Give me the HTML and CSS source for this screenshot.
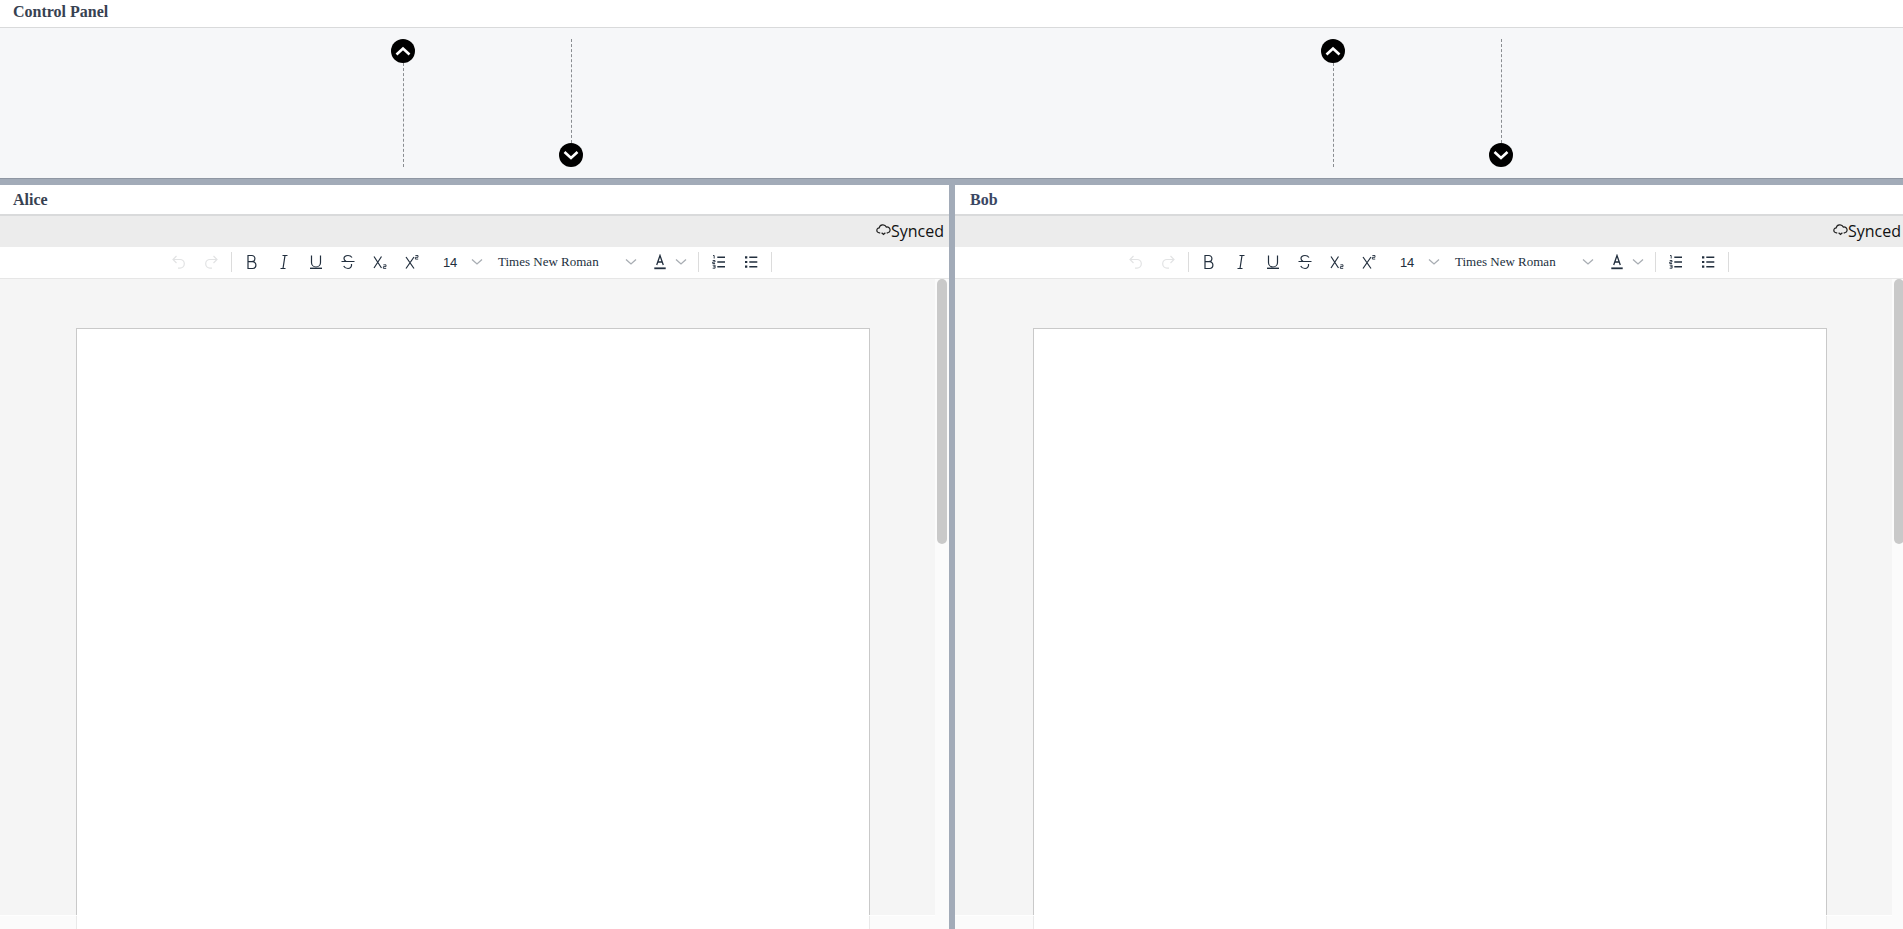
FILE: index.html
```html
<!doctype html>
<html lang="en">
  <head>
    <meta charset="utf-8">
    <meta name="viewport" content="width=device-width, initial-scale=1">
    <title>Control Panel</title>
    <link rel="stylesheet" href="styles.css">
  </head>
  <body>
    <section class="control">
      <div class="title-bar">Control Panel</div>
      <div class="sim">
        <div class="sim-half">
          <div class="lane">
            <span class="arrow"><svg viewBox="0 0 24 24"><circle cx="12" cy="12" r="12"/><path d="M5.500 15.500 12 9.500l6.500 6"/></svg></span>
            <span class="dash"></span>
          </div>
          <div class="lane">
            <span class="dash"></span>
            <span class="arrow"><svg viewBox="0 0 24 24"><circle cx="12" cy="12" r="12"/><path d="M5.500 9 12 15l6.500-6"/></svg></span>
          </div>
        </div>
        <div class="sim-half">
          <div class="lane">
            <span class="arrow"><svg viewBox="0 0 24 24"><circle cx="12" cy="12" r="12"/><path d="M5.500 15.500 12 9.500l6.500 6"/></svg></span>
            <span class="dash"></span>
          </div>
          <div class="lane">
            <span class="dash"></span>
            <span class="arrow"><svg viewBox="0 0 24 24"><circle cx="12" cy="12" r="12"/><path d="M5.500 9 12 15l6.500-6"/></svg></span>
          </div>
        </div>
      </div>
    </section>

    <main class="panes">
      <section class="pane pane-alice">
        <div class="title-bar">Alice</div>
        <div class="status"><svg class="cloud" viewBox="0 0 16 16"><path d="M4.500 11.500H3.600A2.600 2.600 0 0 1 3.400 6.300 4 4 0 0 1 11 5.400a3.100 3.100 0 0 1 1.600 6.100h-1.200M6 11.500l2 1.800 2-1.800"/></svg><span>Synced</span></div>
        <div class="toolbar">
          <span class="tool off"><svg viewBox="0 0 16 16"><path d="M5.500 2 2 5.500 5.500 9M2 5.500h7a4.300 4.300 0 0 1 0 8.600H7"/></svg></span>
          <span class="tool off"><svg viewBox="0 0 16 16"><path d="M10.500 2 14 5.500 10.500 9M14 5.500H7a4.300 4.300 0 0 0 0 8.600h2"/></svg></span>
          <span class="sep"></span>
          <span class="tool"><svg viewBox="0 0 16 16"><path d="M4 1.500v13h4.500a3.400 3.400 0 0 0 0-6.800H4h3.800a3.100 3.100 0 0 0 0-6.200z"/></svg></span>
          <span class="tool"><svg viewBox="0 0 16 16"><path d="M6.500 1.500h5M4.500 14.500h5M9 1.500l-2 13"/></svg></span>
          <span class="tool"><svg viewBox="0 0 16 16"><path d="M3.500 1.500v7a4.500 4.500 0 0 0 9 0v-7"/><path class="heavy" d="M2 14.300h12"/></svg></span>
          <span class="tool"><svg viewBox="0 0 16 16"><path d="M12 3.500C11 2 9.500 1.500 8 1.500c-2 0-4 1-4 3 0 1 .5 2 2 2.800M1.500 7.500h13M11.500 10c.5 3-1.500 4.500-3.500 4.500-2 0-3.500-1-4.300-2.500"/></svg></span>
          <span class="tool"><svg viewBox="0 0 16 16"><path d="M2 2.500 9.500 14M9.500 2.500 2 14"/><path class="script" d="M11.400 10.800H14v1.800h-2.600v1.800h2.800"/></svg></span>
          <span class="tool"><svg viewBox="0 0 16 16"><path d="M2 3l8 11.500M10 3 2 14.500"/><path class="script" d="M11.400 1.500H14v1.800h-2.600v1.800h2.800"/></svg></span>
          <span class="select select-size"><span class="size-val">14</span><svg class="chev" viewBox="0 0 12 8"><path d="M1 1.500 6 6l5-4.500"/></svg></span>
          <span class="select select-font"><span class="font-val">Times New Roman</span><svg class="chev" viewBox="0 0 12 8"><path d="M1 1.500 6 6l5-4.500"/></svg></span>
          <span class="select select-color"><svg class="color-a" viewBox="0 0 16 16"><path d="M4.700 11 8 1.500 11.300 11M5.800 8h4.400"/><path class="bar" d="M2.300 14.300h11.400"/></svg><svg class="chev" viewBox="0 0 12 8"><path d="M1 1.500 6 6l5-4.500"/></svg></span>
          <span class="sep"></span>
          <span class="tool"><svg viewBox="0 0 16 16"><path class="heavy" d="M6.300 3.300H14M6.300 8H14M6.300 12.700H14"/><path class="script" d="M2 1.500h1.200v3M1.700 6.500h2.300v1.500H1.700v1.500h2.400M1.700 11.200h2.400v3H1.700M2.400 12.700h1.500"/></svg></span>
          <span class="tool"><svg viewBox="0 0 16 16"><path class="heavy" d="M6.300 3.300h8M6.300 8h8M6.300 12.700h8"/><path class="dot" d="M2 3.300h2.300M2 8h2.300M2 12.700h2.300"/></svg></span>
          <span class="sep"></span>
        </div>
        <div class="doc-wrap">
          <div class="doc"><div class="page"></div></div>
          <div class="track-v"><div class="thumb"></div></div>
          <div class="track-h"></div>
        </div>
      </section>
      <div class="split"></div>
      <section class="pane pane-bob">
        <div class="title-bar">Bob</div>
        <div class="status"><svg class="cloud" viewBox="0 0 16 16"><path d="M4.500 11.500H3.600A2.600 2.600 0 0 1 3.400 6.300 4 4 0 0 1 11 5.400a3.100 3.100 0 0 1 1.600 6.100h-1.200M6 11.500l2 1.800 2-1.800"/></svg><span>Synced</span></div>
        <div class="toolbar">
          <span class="tool off"><svg viewBox="0 0 16 16"><path d="M5.500 2 2 5.500 5.500 9M2 5.500h7a4.300 4.300 0 0 1 0 8.600H7"/></svg></span>
          <span class="tool off"><svg viewBox="0 0 16 16"><path d="M10.500 2 14 5.500 10.500 9M14 5.500H7a4.300 4.300 0 0 0 0 8.600h2"/></svg></span>
          <span class="sep"></span>
          <span class="tool"><svg viewBox="0 0 16 16"><path d="M4 1.500v13h4.500a3.400 3.400 0 0 0 0-6.800H4h3.800a3.100 3.100 0 0 0 0-6.200z"/></svg></span>
          <span class="tool"><svg viewBox="0 0 16 16"><path d="M6.500 1.500h5M4.500 14.500h5M9 1.500l-2 13"/></svg></span>
          <span class="tool"><svg viewBox="0 0 16 16"><path d="M3.500 1.500v7a4.500 4.500 0 0 0 9 0v-7"/><path class="heavy" d="M2 14.300h12"/></svg></span>
          <span class="tool"><svg viewBox="0 0 16 16"><path d="M12 3.500C11 2 9.500 1.500 8 1.500c-2 0-4 1-4 3 0 1 .5 2 2 2.800M1.500 7.500h13M11.500 10c.5 3-1.500 4.500-3.500 4.500-2 0-3.500-1-4.300-2.500"/></svg></span>
          <span class="tool"><svg viewBox="0 0 16 16"><path d="M2 2.500 9.500 14M9.500 2.500 2 14"/><path class="script" d="M11.400 10.800H14v1.800h-2.600v1.800h2.800"/></svg></span>
          <span class="tool"><svg viewBox="0 0 16 16"><path d="M2 3l8 11.500M10 3 2 14.500"/><path class="script" d="M11.400 1.500H14v1.800h-2.600v1.800h2.800"/></svg></span>
          <span class="select select-size"><span class="size-val">14</span><svg class="chev" viewBox="0 0 12 8"><path d="M1 1.500 6 6l5-4.500"/></svg></span>
          <span class="select select-font"><span class="font-val">Times New Roman</span><svg class="chev" viewBox="0 0 12 8"><path d="M1 1.500 6 6l5-4.500"/></svg></span>
          <span class="select select-color"><svg class="color-a" viewBox="0 0 16 16"><path d="M4.700 11 8 1.500 11.300 11M5.800 8h4.400"/><path class="bar" d="M2.300 14.300h11.400"/></svg><svg class="chev" viewBox="0 0 12 8"><path d="M1 1.500 6 6l5-4.500"/></svg></span>
          <span class="sep"></span>
          <span class="tool"><svg viewBox="0 0 16 16"><path class="heavy" d="M6.300 3.300H14M6.300 8H14M6.300 12.700H14"/><path class="script" d="M2 1.500h1.200v3M1.700 6.500h2.300v1.500H1.700v1.500h2.400M1.700 11.200h2.400v3H1.700M2.400 12.700h1.500"/></svg></span>
          <span class="tool"><svg viewBox="0 0 16 16"><path class="heavy" d="M6.300 3.300h8M6.300 8h8M6.300 12.700h8"/><path class="dot" d="M2 3.300h2.300M2 8h2.300M2 12.700h2.300"/></svg></span>
          <span class="sep"></span>
        </div>
        <div class="doc-wrap">
          <div class="doc"><div class="page"></div></div>
          <div class="track-v"><div class="thumb"></div></div>
          <div class="track-h"></div>
        </div>
      </section>
    </main>
  </body>
</html>
```

FILE: styles.css
```css
* {
  box-sizing: border-box;
}
html, body {
  height: 100%;
}
body {
  margin: 0;
  display: flex;
  flex-direction: column;
  overflow: hidden;
  background: white;
  font-family: "Liberation Serif", serif;
}
.title-bar {
  height: 28px;
  padding: 3px 0 0 13px;
  flex: none;
  font-size: 16px;
  font-weight: bold;
  line-height: 18px;
  color: #374151;
  background: white;
  border-bottom: 1px solid #d9dadb;
}
.control {
  flex: none;
}
.sim {
  height: 151px;
  display: flex;
  background: #f6f7f9;
  border-bottom: 1px solid #8f97a3;
}
.sim-half {
  width: 930px;
  flex: none;
  display: flex;
  padding-left: 391px;
  gap: 144px;
}
.lane {
  width: 24px;
  height: 128px;
  margin-top: 11px;
  display: flex;
  flex-direction: column;
  align-items: center;
}
.dash {
  flex: 1;
  width: 0;
  margin-left: 1px;
  border-left: 1px dashed #8a8d91;
}
.arrow {
  width: 24px;
  height: 24px;
  flex: none;
}
.arrow svg {
  display: block;
  width: 24px;
  height: 24px;
}
.arrow circle {
  fill: black;
}
.arrow path {
  fill: none;
  stroke: white;
  stroke-width: 2.6;
}
.panes {
  flex: 1;
  min-height: 0;
  display: flex;
  border-top: 6px solid #a2abb8;
}
.pane {
  flex: none;
  display: flex;
  flex-direction: column;
  min-height: 0;
}
.pane-alice {
  width: 949px;
}
.pane-bob {
  width: 951px;
}
.split {
  width: 6px;
  flex: none;
  background: #a2abb8;
}
.pane .title-bar {
  height: 31px;
  padding-top: 6px;
  border-bottom-width: 2px;
}
.pane-bob .title-bar {
  padding-left: 15px;
  color: #3b4763;
}
.status {
  height: 31px;
  flex: none;
  display: flex;
  justify-content: flex-end;
  align-items: center;
  padding: 0 5px 2px 0;
  background: #ececec;
  font-family: "Open Sans", sans-serif;
  font-size: 16px;
  color: #111;
}
.cloud {
  width: 15px;
  height: 15px;
  margin-bottom: 3px;
  fill: none;
  stroke: #222;
  stroke-width: 1.3;
}
.toolbar {
  height: 32px;
  flex: none;
  display: flex;
  justify-content: center;
  align-items: center;
  padding: 0 10px 1px 0;
  background: white;
  border-bottom: 1px solid #e6e6e6;
}
.pane-bob .toolbar {
  padding-right: 8px;
}
.tool {
  width: 32px;
  height: 24px;
  flex: none;
  display: flex;
  justify-content: center;
  align-items: center;
}
.tool svg {
  width: 16px;
  height: 16px;
  fill: none;
  stroke: #222f3e;
  stroke-width: 1.2;
}
.tool.off svg {
  stroke: #e2e3e4;
}
.tool .script {
  stroke-width: 0.9;
}
.tool .heavy {
  stroke-width: 1.4;
}
.tool .dot {
  stroke-width: 2.2;
}
.sep {
  width: 1px;
  height: 20px;
  margin: 0 4px;
  flex: none;
  background: #dcdcdc;
}
.select {
  flex: none;
  height: 24px;
  display: flex;
  align-items: center;
  justify-content: space-between;
}
.chev {
  width: 12px;
  height: 8px;
  flex: none;
  fill: none;
  stroke: #a8adb3;
  stroke-width: 1.3;
}
.select-size {
  width: 60px;
  padding: 0 5px 0 15px;
}
.size-val {
  font-family: "Liberation Sans", sans-serif;
  font-size: 13px;
  letter-spacing: -0.3px;
  color: #222f3e;
}
.select-font {
  width: 153px;
  padding: 0 4px 0 10px;
}
.font-val {
  font-size: 13px;
  color: #222f3e;
}
.select-color {
  width: 53px;
  padding: 0 7px 0 11px;
}
.color-a {
  width: 16px;
  height: 16px;
  fill: none;
  stroke: #222f3e;
  stroke-width: 1.3;
}
.color-a .bar {
  stroke-width: 1.8;
}
.doc-wrap {
  flex: 1;
  min-height: 0;
  position: relative;
}
.doc {
  height: 100%;
  overflow: hidden;
  background: #f5f5f5;
  padding: 49px 0 0 76px;
}
.pane-bob .doc {
  padding-left: 78px;
}
.page {
  width: 794px;
  height: 1123px;
  background: white;
  border: 1px solid #c9c9c9;
}
.track-v {
  position: absolute;
  top: 0;
  right: 0;
  bottom: 0;
  width: 14px;
  background: rgba(255, 255, 255, 0.6);
}
.thumb {
  width: 10px;
  height: 265px;
  margin-left: 2px;
  background: #c9c9c9;
  border-radius: 5px;
}
.track-h {
  position: absolute;
  left: 0;
  right: 14px;
  bottom: 0;
  height: 14px;
  background: rgba(255, 255, 255, 0.6);
  border-top: 1px solid rgba(255, 255, 255, 0.8);
}
```
